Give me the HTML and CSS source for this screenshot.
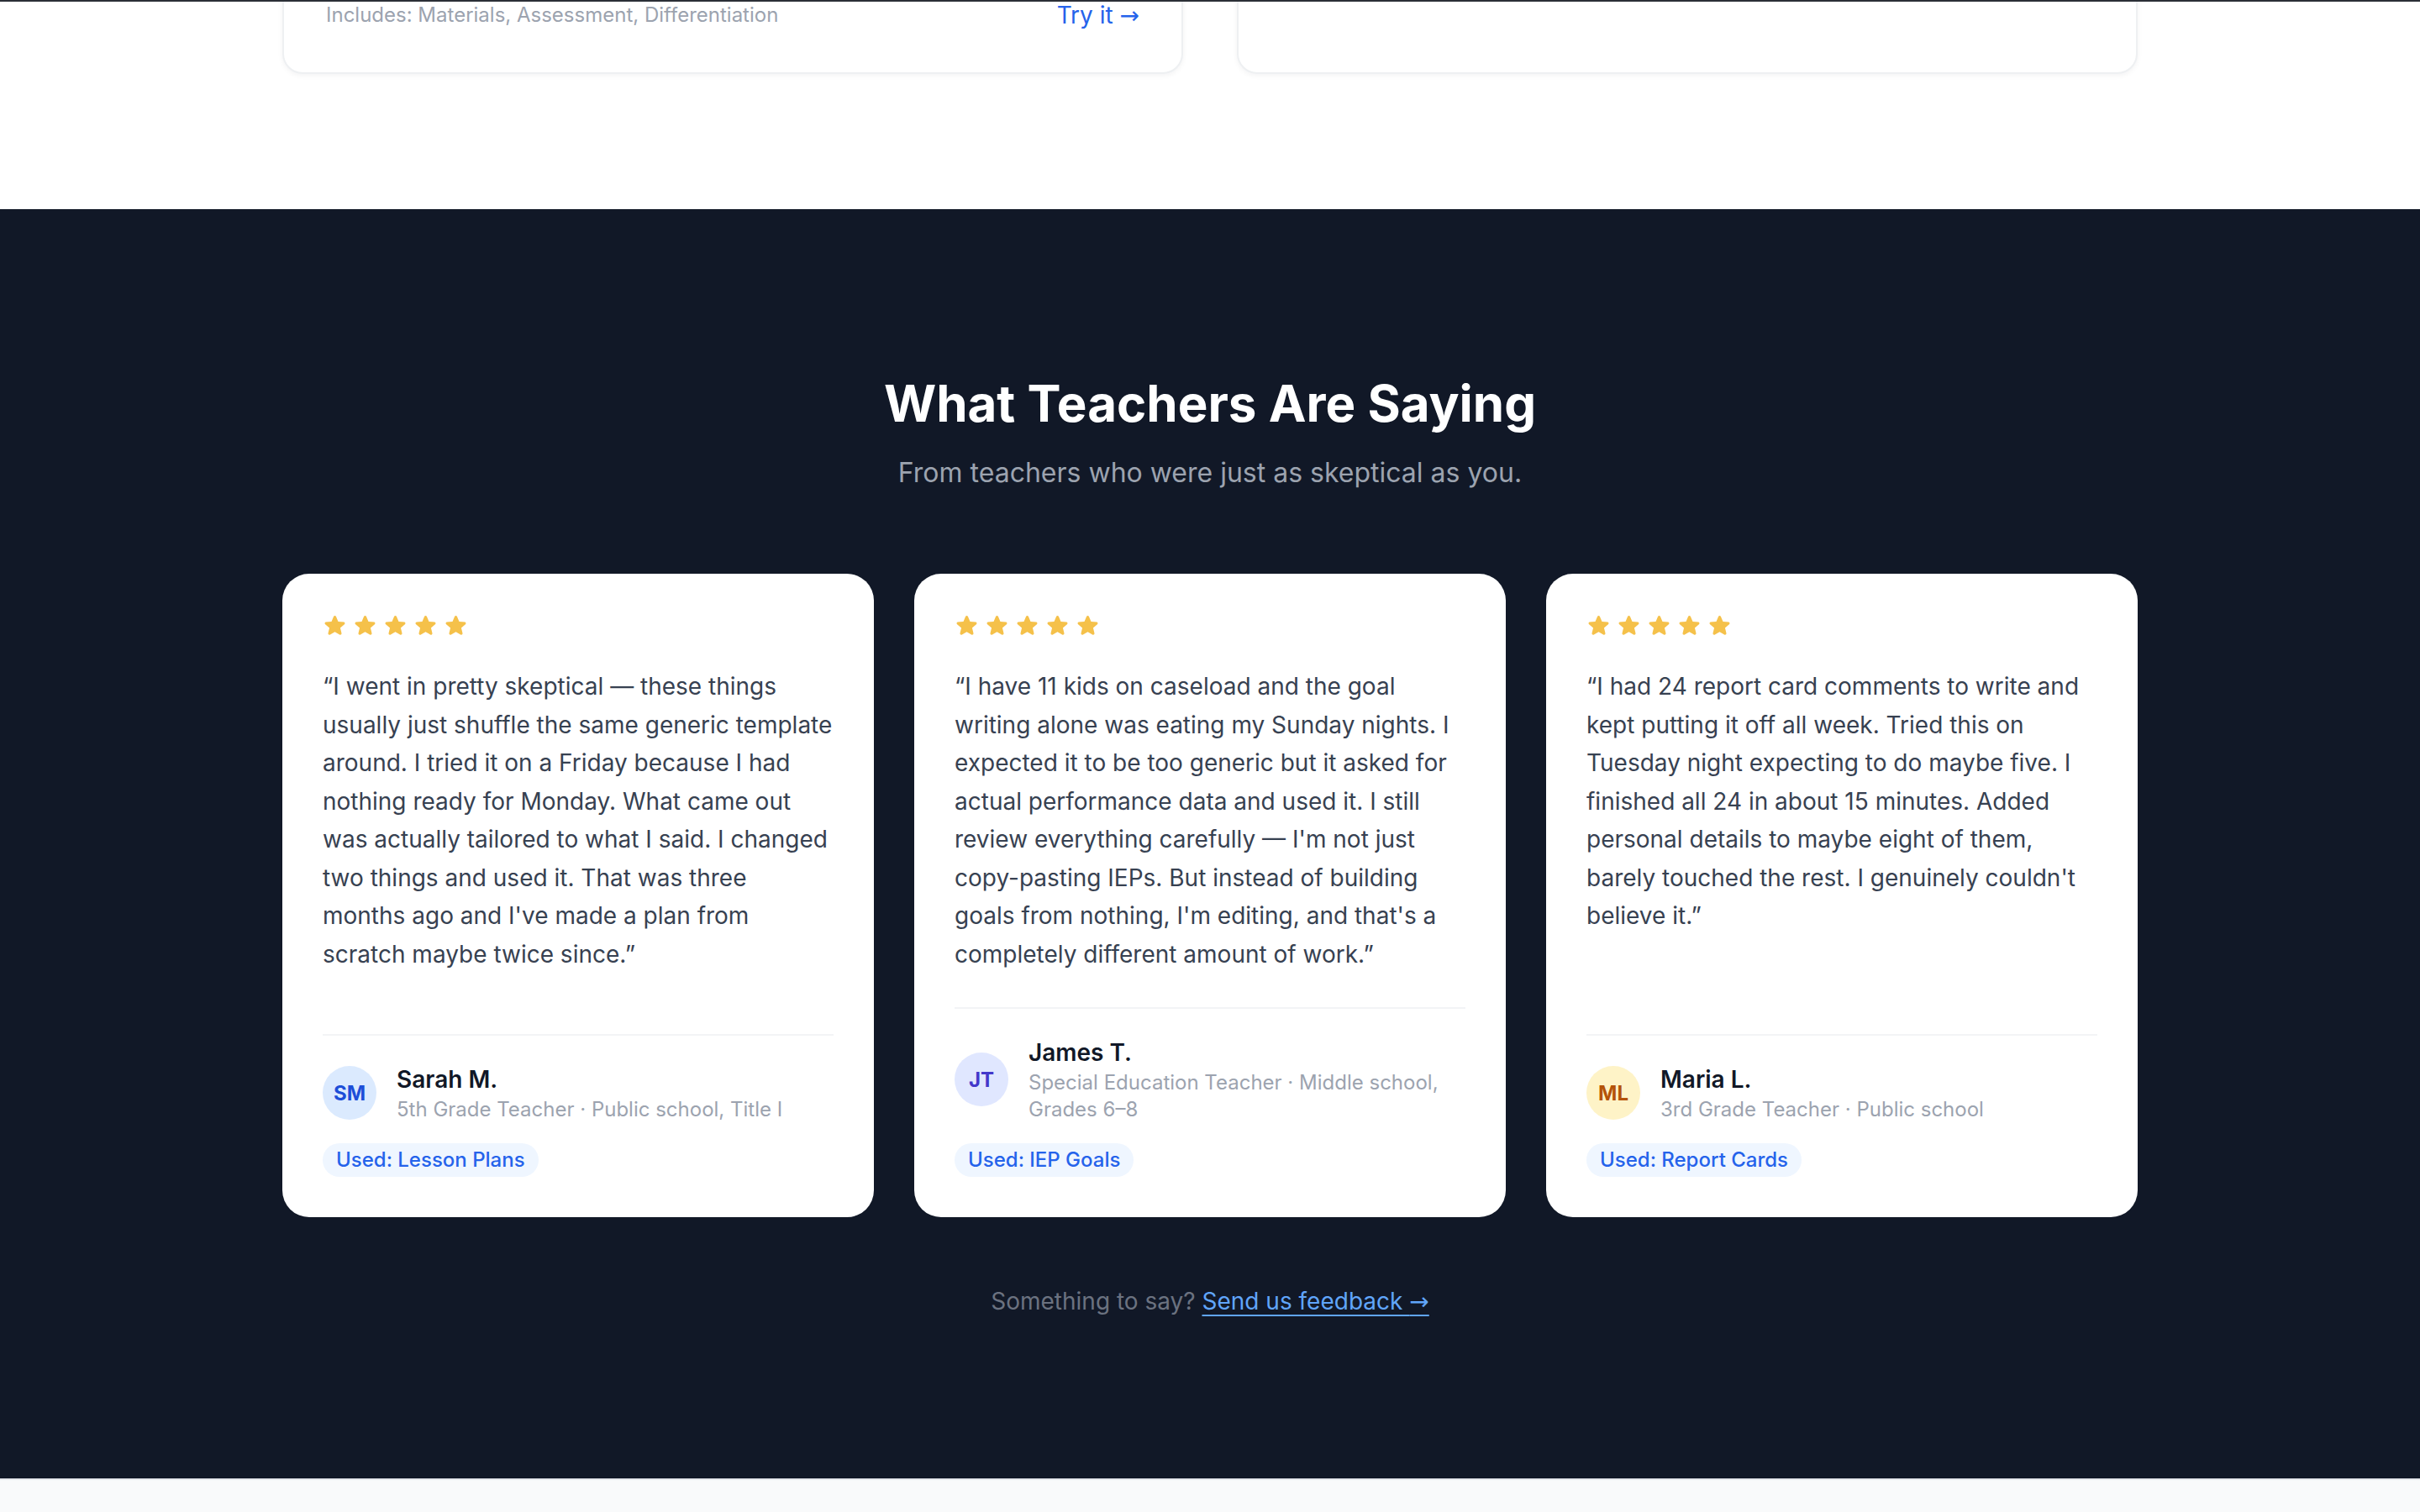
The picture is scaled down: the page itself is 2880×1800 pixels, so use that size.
FILE: index.html
```html
<!DOCTYPE html>
<html lang="en">
<head>
<meta charset="utf-8">
<title>What Teachers Are Saying</title>
<link rel="stylesheet" href="styles.css">
</head>
<body>
<div class="top-edge"></div>

<section class="tools">
  <div class="container tools-grid">
    <div class="tool-card">
      <div class="tool-foot">
        <span class="tool-includes">Includes: Materials, Assessment, Differentiation</span>
        <a class="tool-link" href="#">Try it <span class="arrow">→</span></a>
      </div>
    </div>
    <div class="tool-card">
      <div class="tool-foot"></div>
    </div>
  </div>
</section>

<section class="testimonials">
  <div class="container">
    <h2 class="t-title">What Teachers Are Saying</h2>
    <p class="t-sub">From teachers who were just as skeptical as you.</p>

    <div class="t-grid">
      <article class="t-card">
        <div class="stars">
          <svg viewBox="0 0 24 24"><path d="M10.788 3.21c.448-1.077 1.976-1.077 2.424 0l2.082 5.006 5.404.434c1.164.093 1.636 1.545.749 2.305l-4.117 3.527 1.257 5.273c.271 1.136-.964 2.033-1.96 1.425L12 18.354 7.373 21.18c-.996.608-2.231-.29-1.96-1.425l1.257-5.273-4.117-3.527c-.887-.76-.415-2.212.749-2.305l5.404-.434 2.082-5.005Z"/></svg>
          <svg viewBox="0 0 24 24"><path d="M10.788 3.21c.448-1.077 1.976-1.077 2.424 0l2.082 5.006 5.404.434c1.164.093 1.636 1.545.749 2.305l-4.117 3.527 1.257 5.273c.271 1.136-.964 2.033-1.96 1.425L12 18.354 7.373 21.18c-.996.608-2.231-.29-1.96-1.425l1.257-5.273-4.117-3.527c-.887-.76-.415-2.212.749-2.305l5.404-.434 2.082-5.005Z"/></svg>
          <svg viewBox="0 0 24 24"><path d="M10.788 3.21c.448-1.077 1.976-1.077 2.424 0l2.082 5.006 5.404.434c1.164.093 1.636 1.545.749 2.305l-4.117 3.527 1.257 5.273c.271 1.136-.964 2.033-1.96 1.425L12 18.354 7.373 21.18c-.996.608-2.231-.29-1.96-1.425l1.257-5.273-4.117-3.527c-.887-.76-.415-2.212.749-2.305l5.404-.434 2.082-5.005Z"/></svg>
          <svg viewBox="0 0 24 24"><path d="M10.788 3.21c.448-1.077 1.976-1.077 2.424 0l2.082 5.006 5.404.434c1.164.093 1.636 1.545.749 2.305l-4.117 3.527 1.257 5.273c.271 1.136-.964 2.033-1.96 1.425L12 18.354 7.373 21.18c-.996.608-2.231-.29-1.96-1.425l1.257-5.273-4.117-3.527c-.887-.76-.415-2.212.749-2.305l5.404-.434 2.082-5.005Z"/></svg>
          <svg viewBox="0 0 24 24"><path d="M10.788 3.21c.448-1.077 1.976-1.077 2.424 0l2.082 5.006 5.404.434c1.164.093 1.636 1.545.749 2.305l-4.117 3.527 1.257 5.273c.271 1.136-.964 2.033-1.96 1.425L12 18.354 7.373 21.18c-.996.608-2.231-.29-1.96-1.425l1.257-5.273-4.117-3.527c-.887-.76-.415-2.212.749-2.305l5.404-.434 2.082-5.005Z"/></svg>
        </div>
        <p class="quote">“I went in pretty skeptical — these things usually just shuffle the same generic template around. I tried it on a Friday because I had nothing ready for Monday. What came out was actually tailored to what I said. I changed two things and used it. That was three months ago and I've made a plan from scratch maybe twice since.”</p>
        <div class="t-foot">
          <div class="person">
            <div class="avatar av-blue">SM</div>
            <div class="who">
              <div class="name">Sarah M.</div>
              <div class="role">5th Grade Teacher · Public school, Title I</div>
            </div>
          </div>
          <span class="badge">Used: Lesson Plans</span>
        </div>
      </article>

      <article class="t-card">
        <div class="stars">
          <svg viewBox="0 0 24 24"><path d="M10.788 3.21c.448-1.077 1.976-1.077 2.424 0l2.082 5.006 5.404.434c1.164.093 1.636 1.545.749 2.305l-4.117 3.527 1.257 5.273c.271 1.136-.964 2.033-1.96 1.425L12 18.354 7.373 21.18c-.996.608-2.231-.29-1.96-1.425l1.257-5.273-4.117-3.527c-.887-.76-.415-2.212.749-2.305l5.404-.434 2.082-5.005Z"/></svg>
          <svg viewBox="0 0 24 24"><path d="M10.788 3.21c.448-1.077 1.976-1.077 2.424 0l2.082 5.006 5.404.434c1.164.093 1.636 1.545.749 2.305l-4.117 3.527 1.257 5.273c.271 1.136-.964 2.033-1.96 1.425L12 18.354 7.373 21.18c-.996.608-2.231-.29-1.96-1.425l1.257-5.273-4.117-3.527c-.887-.76-.415-2.212.749-2.305l5.404-.434 2.082-5.005Z"/></svg>
          <svg viewBox="0 0 24 24"><path d="M10.788 3.21c.448-1.077 1.976-1.077 2.424 0l2.082 5.006 5.404.434c1.164.093 1.636 1.545.749 2.305l-4.117 3.527 1.257 5.273c.271 1.136-.964 2.033-1.96 1.425L12 18.354 7.373 21.18c-.996.608-2.231-.29-1.96-1.425l1.257-5.273-4.117-3.527c-.887-.76-.415-2.212.749-2.305l5.404-.434 2.082-5.005Z"/></svg>
          <svg viewBox="0 0 24 24"><path d="M10.788 3.21c.448-1.077 1.976-1.077 2.424 0l2.082 5.006 5.404.434c1.164.093 1.636 1.545.749 2.305l-4.117 3.527 1.257 5.273c.271 1.136-.964 2.033-1.96 1.425L12 18.354 7.373 21.18c-.996.608-2.231-.29-1.96-1.425l1.257-5.273-4.117-3.527c-.887-.76-.415-2.212.749-2.305l5.404-.434 2.082-5.005Z"/></svg>
          <svg viewBox="0 0 24 24"><path d="M10.788 3.21c.448-1.077 1.976-1.077 2.424 0l2.082 5.006 5.404.434c1.164.093 1.636 1.545.749 2.305l-4.117 3.527 1.257 5.273c.271 1.136-.964 2.033-1.96 1.425L12 18.354 7.373 21.18c-.996.608-2.231-.29-1.96-1.425l1.257-5.273-4.117-3.527c-.887-.76-.415-2.212.749-2.305l5.404-.434 2.082-5.005Z"/></svg>
        </div>
        <p class="quote">“I have 11 kids on caseload and the goal writing alone was eating my Sunday nights. I expected it to be too generic but it asked for actual performance data and used it. I still review everything carefully — I'm not just copy-pasting IEPs. But instead of building goals from nothing, I'm editing, and that's a completely different amount of work.”</p>
        <div class="t-foot">
          <div class="person">
            <div class="avatar av-indigo">JT</div>
            <div class="who">
              <div class="name">James T.</div>
              <div class="role">Special Education Teacher · Middle school, Grades 6–8</div>
            </div>
          </div>
          <span class="badge">Used: IEP Goals</span>
        </div>
      </article>

      <article class="t-card">
        <div class="stars">
          <svg viewBox="0 0 24 24"><path d="M10.788 3.21c.448-1.077 1.976-1.077 2.424 0l2.082 5.006 5.404.434c1.164.093 1.636 1.545.749 2.305l-4.117 3.527 1.257 5.273c.271 1.136-.964 2.033-1.96 1.425L12 18.354 7.373 21.18c-.996.608-2.231-.29-1.96-1.425l1.257-5.273-4.117-3.527c-.887-.76-.415-2.212.749-2.305l5.404-.434 2.082-5.005Z"/></svg>
          <svg viewBox="0 0 24 24"><path d="M10.788 3.21c.448-1.077 1.976-1.077 2.424 0l2.082 5.006 5.404.434c1.164.093 1.636 1.545.749 2.305l-4.117 3.527 1.257 5.273c.271 1.136-.964 2.033-1.96 1.425L12 18.354 7.373 21.18c-.996.608-2.231-.29-1.96-1.425l1.257-5.273-4.117-3.527c-.887-.76-.415-2.212.749-2.305l5.404-.434 2.082-5.005Z"/></svg>
          <svg viewBox="0 0 24 24"><path d="M10.788 3.21c.448-1.077 1.976-1.077 2.424 0l2.082 5.006 5.404.434c1.164.093 1.636 1.545.749 2.305l-4.117 3.527 1.257 5.273c.271 1.136-.964 2.033-1.96 1.425L12 18.354 7.373 21.18c-.996.608-2.231-.29-1.96-1.425l1.257-5.273-4.117-3.527c-.887-.76-.415-2.212.749-2.305l5.404-.434 2.082-5.005Z"/></svg>
          <svg viewBox="0 0 24 24"><path d="M10.788 3.21c.448-1.077 1.976-1.077 2.424 0l2.082 5.006 5.404.434c1.164.093 1.636 1.545.749 2.305l-4.117 3.527 1.257 5.273c.271 1.136-.964 2.033-1.96 1.425L12 18.354 7.373 21.18c-.996.608-2.231-.29-1.96-1.425l1.257-5.273-4.117-3.527c-.887-.76-.415-2.212.749-2.305l5.404-.434 2.082-5.005Z"/></svg>
          <svg viewBox="0 0 24 24"><path d="M10.788 3.21c.448-1.077 1.976-1.077 2.424 0l2.082 5.006 5.404.434c1.164.093 1.636 1.545.749 2.305l-4.117 3.527 1.257 5.273c.271 1.136-.964 2.033-1.96 1.425L12 18.354 7.373 21.18c-.996.608-2.231-.29-1.96-1.425l1.257-5.273-4.117-3.527c-.887-.76-.415-2.212.749-2.305l5.404-.434 2.082-5.005Z"/></svg>
        </div>
        <p class="quote">“I had 24 report card comments to write and kept putting it off all week. Tried this on Tuesday night expecting to do maybe five. I finished all 24 in about 15 minutes. Added personal details to maybe eight of them, barely touched the rest. I genuinely couldn't believe it.”</p>
        <div class="t-foot">
          <div class="person">
            <div class="avatar av-amber">ML</div>
            <div class="who">
              <div class="name">Maria L.</div>
              <div class="role">3rd Grade Teacher · Public school</div>
            </div>
          </div>
          <span class="badge">Used: Report Cards</span>
        </div>
      </article>
    </div>

    <p class="feedback">Something to say? <a href="#">Send us feedback <span class="arrow">→</span></a></p>
  </div>
</section>

<footer class="site-foot"></footer>
</body>
</html>
```

FILE: styles.css
```css
* { box-sizing: border-box; }

html, body {
  margin: 0;
  padding: 0;
}

body {
  font-family: Inter, "Noto Sans", "Liberation Sans", sans-serif;
  background: #ffffff;
  color: #111827;
  overflow: hidden;
}

.top-edge {
  position: fixed;
  top: 0;
  left: 0;
  right: 0;
  height: 2px;
  background: #2b2f36;
  z-index: 10;
}

.container {
  width: 2208px;
  margin: 0 auto;
}

.arrow {
  font-family: "DejaVu Sans", "Noto Sans", sans-serif;
  font-weight: 400;
}

/* upper tools section (scrolled, only card bottoms visible) */
.tools {
  background: #ffffff;
  margin-top: -52px;
  padding-bottom: 161px;
}

.tools-grid {
  display: grid;
  grid-template-columns: 1fr 1fr;
  gap: 64px;
}

.tool-card {
  background: #ffffff;
  border: 2px solid #eef0f2;
  border-radius: 24px;
  box-shadow: 0 2px 6px rgba(17, 24, 39, 0.05);
  padding: 48px 50px;
}

.tool-foot {
  display: flex;
  align-items: center;
  justify-content: space-between;
  height: 40px;
}

.tool-includes {
  font-size: 24px;
  line-height: 32px;
  color: #9ca3af;
}

.tool-link {
  font-size: 28px;
  line-height: 40px;
  font-weight: 400;
  color: #2563eb;
  text-decoration: none;
}

/* testimonials */
.testimonials {
  background: #111827;
  padding: 196px 0 190px;
}

.t-title {
  margin: 0;
  text-align: center;
  font-size: 60px;
  line-height: 70px;
  font-weight: 700;
  color: #ffffff;
}

.t-sub {
  margin: 24px 0 0;
  text-align: center;
  font-size: 32px;
  line-height: 48px;
  color: #9ca3af;
}

.t-grid {
  display: grid;
  grid-template-columns: repeat(3, 1fr);
  gap: 48px;
  margin-top: 96px;
}

.t-card {
  background: #ffffff;
  border-radius: 32px;
  padding: 48px;
  display: flex;
  flex-direction: column;
}

.stars {
  display: flex;
  align-items: center;
  gap: 7px;
  height: 26px;
  margin-bottom: 38px;
}

.stars svg {
  width: 29px;
  height: 29px;
  display: block;
  flex: 0 0 29px;
}

.stars path {
  fill: #f5c14a;
}

.quote {
  margin: 0 0 40px;
  font-size: 28px;
  line-height: 45.5px;
  color: #374151;
}

.t-foot {
  margin-top: auto;
  border-top: 2px solid #f3f4f6;
  padding-top: 32px;
}

.person {
  display: flex;
  align-items: center;
  gap: 24px;
}

.avatar {
  flex: 0 0 64px;
  width: 64px;
  height: 64px;
  border-radius: 50%;
  display: flex;
  align-items: center;
  justify-content: center;
  font-size: 24px;
  font-weight: 700;
}

.av-blue { background: #dbeafe; color: #1d4ed8; }
.av-indigo { background: #e0e7ff; color: #4338ca; }
.av-amber { background: #fef3c7; color: #b45309; }

.name {
  font-size: 28px;
  line-height: 40px;
  font-weight: 600;
  color: #111827;
}

.role {
  font-size: 24px;
  line-height: 32px;
  color: #9ca3af;
}

.badge {
  display: inline-block;
  margin-top: 24px;
  padding: 4px 16px;
  border-radius: 999px;
  background: #eff6ff;
  color: #2563eb;
  font-size: 24px;
  line-height: 32px;
  font-weight: 500;
}

.feedback {
  margin: 80px 0 0;
  text-align: center;
  font-size: 28px;
  line-height: 40px;
  color: #6b7280;
}

.feedback a {
  color: #60a5fa;
  text-decoration: underline;
  text-decoration-thickness: 2px;
  text-underline-offset: 6px;
}

.site-foot {
  border-top: 2px solid #e5e7eb;
  background: #f9fafb;
  height: 200px;
}
```
